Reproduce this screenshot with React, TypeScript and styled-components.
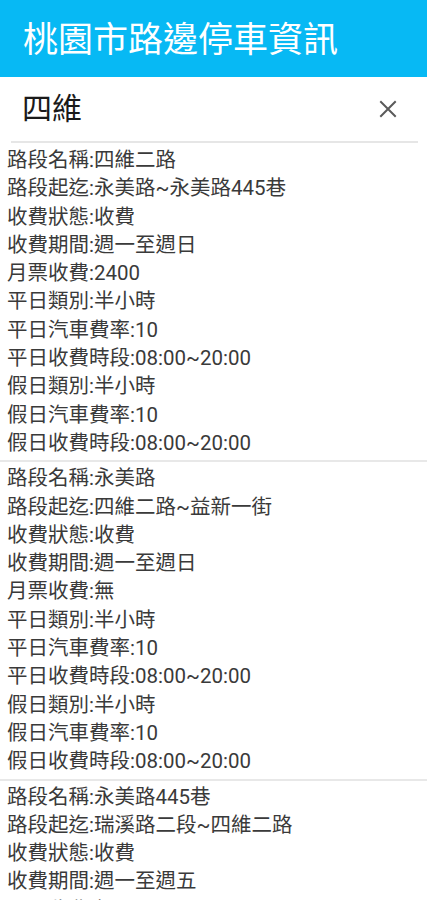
import React from "react";
import styled, { createGlobalStyle } from "styled-components";

const Global = createGlobalStyle`
  html, body { margin: 0; padding: 0; background: #ffffff; }
  body { font-family: "Roboto", "Noto Sans CJK TC", sans-serif; }
`;

const Page = styled.div`
  width: 427px;
  height: 900px;
  overflow: hidden;
  background: #fff;
  display: flex;
  flex-direction: column;
`;

const Header = styled.header`
  height: 77px;
  background: #07b9f4;
  display: flex;
  align-items: center;
  padding: 4px 0 0 23px;
  box-sizing: border-box;
  flex-shrink: 0;
`;

const Title = styled.h1`
  margin: 0;
  color: #ffffff;
  font-family: "Roboto", "Noto Sans CJK TC", sans-serif;
  font-weight: 400;
  font-size: 35px;
  line-height: 1;
`;

const SearchBar = styled.div`
  height: 64px;
  margin: 0 9px 0 11px;
  border-bottom: 2px solid #e6e6e6;
  display: flex;
  align-items: center;
  justify-content: space-between;
  flex-shrink: 0;
`;

const Query = styled.span`
  font-family: "Roboto", "Noto Sans CJK TC", sans-serif;
  font-size: 30px;
  color: #1a1a1a;
  padding-left: 11px;
  line-height: 1;
`;

const ClearButton = styled.button`
  border: none;
  background: none;
  padding: 0;
  width: 40px;
  height: 40px;
  display: flex;
  align-items: center;
  justify-content: center;
  margin-right: 10px;
`;

const List = styled.div`
  display: flex;
  flex-direction: column;
`;

const Record = styled.div`
  padding: 3px 0 3px 7px;
  border-bottom: 2px solid #e8e8e8;
  display: flex;
  flex-direction: column;
  & + & {
    padding-top: 2px;
  }
`;

const Line = styled.div`
  font-family: "Roboto", "Noto Sans CJK TC", sans-serif;
  font-size: 20.5px;
  line-height: 28.3px;
  color: #3a3a3a;
  white-space: nowrap;
`;

const records: string[][] = [
  [
    "路段名稱:四維二路",
    "路段起迄:永美路~永美路445巷",
    "收費狀態:收費",
    "收費期間:週一至週日",
    "月票收費:2400",
    "平日類別:半小時",
    "平日汽車費率:10",
    "平日收費時段:08:00~20:00",
    "假日類別:半小時",
    "假日汽車費率:10",
    "假日收費時段:08:00~20:00",
  ],
  [
    "路段名稱:永美路",
    "路段起迄:四維二路~益新一街",
    "收費狀態:收費",
    "收費期間:週一至週日",
    "月票收費:無",
    "平日類別:半小時",
    "平日汽車費率:10",
    "平日收費時段:08:00~20:00",
    "假日類別:半小時",
    "假日汽車費率:10",
    "假日收費時段:08:00~20:00",
  ],
  [
    "路段名稱:永美路445巷",
    "路段起迄:瑞溪路二段~四維二路",
    "收費狀態:收費",
    "收費期間:週一至週五",
    "月票收費:無",
    "平日類別:半小時",
  ],
];

export default function App() {
  return (
    <Page>
      <Global />
      <Header>
        <Title>桃園市路邊停車資訊</Title>
      </Header>
      <SearchBar>
        <Query>四維</Query>
        <ClearButton aria-label="clear">
          <svg width="18" height="18" viewBox="0 0 18 18">
            <path d="M2 2 L16 16 M16 2 L2 16" stroke="#5a5a5a" strokeWidth="2" strokeLinecap="square" />
          </svg>
        </ClearButton>
      </SearchBar>
      <List>
        {records.map((r, i) => (
          <Record key={i}>
            {r.map((t, j) => (
              <Line key={j}>{t}</Line>
            ))}
          </Record>
        ))}
      </List>
    </Page>
  );
}
